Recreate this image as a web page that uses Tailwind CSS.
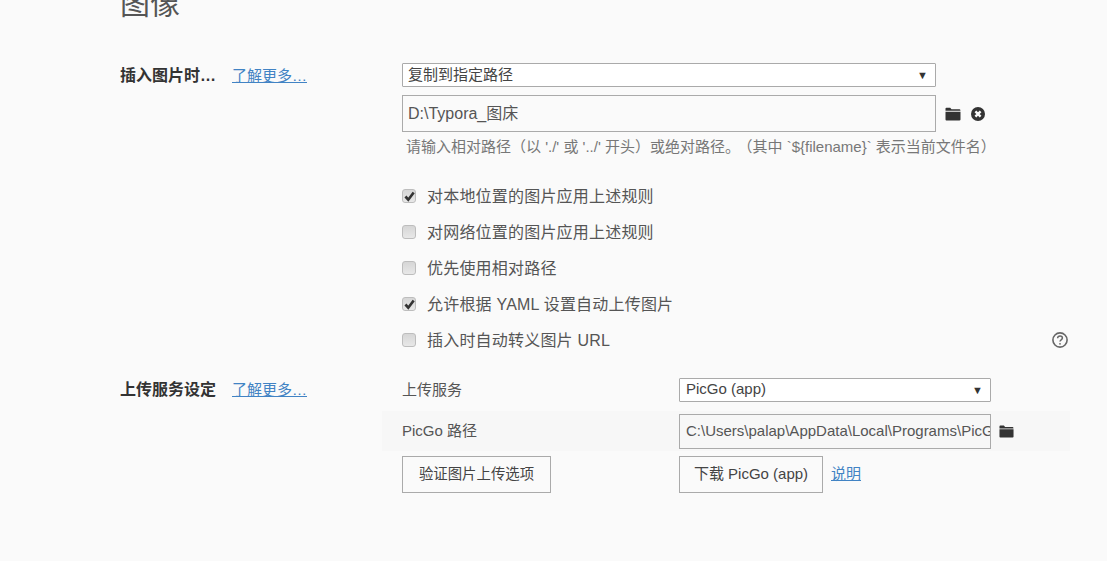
<!DOCTYPE html>
<html lang="zh">
<head>
<meta charset="utf-8">
<script src="https://cdn.jsdelivr.net/npm/@tailwindcss/browser@4"></script>
</head>
<body class="m-0 h-[561px] w-[1107px] overflow-hidden bg-[#fafafa] font-['Liberation_Sans','Noto_Sans_CJK_SC',sans-serif] text-[16px] text-[#333]">
<main class="pl-[120px] pr-[37px]">
  <h1 class="-mt-[14px] h-[77px] text-[30px] leading-[36px] font-normal text-[#555]">图像</h1>

  <section class="flex">
    <div class="flex w-[282px] shrink-0 items-start pt-[2px]">
      <span class="w-[112px] leading-[22px] font-bold text-[#333]">插入图片时…</span>
      <a class="text-[15px] leading-[22px] text-[#4183c4] underline">了解更多…</a>
    </div>
    <div class="flex-1">
      <div class="flex h-[24px] w-[534px] items-center justify-between rounded-[1px] border border-[#aaa] bg-white pr-[7px] pl-[5px] text-[15px] text-[#444]">
        <span class="pt-[1px]">复制到指定路径</span><span class="text-[11px] text-[#333]">▼</span>
      </div>
      <div class="mt-[8px] flex items-center">
        <div class="flex h-[37px] w-[534px] items-center border border-[#aaa] bg-[#fafafa] pl-[5px] text-[#555]">D:\Typora_图床</div>
        <svg class="ml-[9px] h-[16px] w-[16px] text-[#333]" viewBox="0 0 16 16" fill="currentColor"><path d="M.5 2.600c0-.5.4-.9.9-.9h3.800l1.300 1.600h8c.5 0 .9.4.9.9v.5H.5zM.5 5.700h15v7.800c0 .5-.4.9-.9.9H1.400c-.5 0-.9-.4-.9-.9z"/></svg>
        <svg class="ml-[10px] h-[14px] w-[14px] text-[#333]" viewBox="0 0 14 14"><circle cx="7" cy="7" r="7" fill="currentColor"/><path d="M4.400 4.400l5.200 5.200M9.600 4.400l-5.200 5.200" stroke="#fafafa" stroke-width="2.400"/></svg>
      </div>
      <p class="mt-[5px] pl-[4px] text-[15px] leading-[20px] whitespace-nowrap text-[#777]">请输入相对路径（以 './' 或 '../' 开头）或绝对路径。<span class="ml-[5px]">（其中 `${filename}` 表示当前文件名）</span></p>

      <div class="mt-[22px] flex flex-col">
        <label class="flex h-[36px] items-center gap-[11px] tracking-[0.2px] text-[#555]">
          <span class="-mt-[2px] flex h-[14px] w-[14px] items-center justify-center rounded-[3px] border border-[#bdbdbd] bg-gradient-to-b from-[#d6d6d6] to-[#e8e8e8]"><svg class="h-[11px] w-[11px]" viewBox="0 0 10 10"><path d="M1.300 5l2.600 2.900 4.900-6.500" fill="none" stroke="#333" stroke-width="2.400"/></svg></span>
          对本地位置的图片应用上述规则
        </label>
        <label class="flex h-[36px] items-center gap-[11px] tracking-[0.2px] text-[#555]">
          <span class="-mt-[2px] h-[14px] w-[14px] rounded-[3px] border border-[#bdbdbd] bg-gradient-to-b from-[#d6d6d6] to-[#e8e8e8]"></span>
          对网络位置的图片应用上述规则
        </label>
        <label class="flex h-[36px] items-center gap-[11px] tracking-[0.2px] text-[#555]">
          <span class="-mt-[2px] h-[14px] w-[14px] rounded-[3px] border border-[#bdbdbd] bg-gradient-to-b from-[#d6d6d6] to-[#e8e8e8]"></span>
          优先使用相对路径
        </label>
        <label class="flex h-[36px] items-center gap-[11px] tracking-[0.2px] text-[#555]">
          <span class="-mt-[2px] flex h-[14px] w-[14px] items-center justify-center rounded-[3px] border border-[#bdbdbd] bg-gradient-to-b from-[#d6d6d6] to-[#e8e8e8]"><svg class="h-[11px] w-[11px]" viewBox="0 0 10 10"><path d="M1.300 5l2.600 2.900 4.900-6.500" fill="none" stroke="#333" stroke-width="2.400"/></svg></span>
          允许根据 YAML 设置自动上传图片
        </label>
        <label class="flex h-[36px] items-center gap-[11px] tracking-[0.2px] text-[#555]">
          <span class="-mt-[2px] h-[14px] w-[14px] rounded-[3px] border border-[#bdbdbd] bg-gradient-to-b from-[#d6d6d6] to-[#e8e8e8]"></span>
          插入时自动转义图片 URL
          <svg class="mr-[2px] -mt-[3px] ml-auto h-[16px] w-[16px] text-[#666]" viewBox="0 0 16 16" fill="none" stroke="currentColor"><circle cx="8" cy="8" r="7.100" stroke-width="1.600"/><path d="M5.600 6.200c0-1.400 1-2.200 2.400-2.200s2.400.8 2.400 2c0 1.900-2.400 1.800-2.400 3.600" stroke-width="1.500"/><circle cx="8" cy="11.800" r="0.900" fill="currentColor" stroke="none"/></svg>
        </label>
      </div>
    </div>
  </section>

  <section class="mt-[19px] flex">
    <div class="flex w-[282px] shrink-0 items-start pt-[1px]">
      <span class="w-[112px] leading-[22px] font-bold text-[#333]">上传服务设定</span>
      <a class="text-[15px] leading-[22px] text-[#4183c4] underline">了解更多…</a>
    </div>
    <div class="-ml-[20px] flex-1">
      <div class="flex h-[33px] items-start pl-[20px]">
        <span class="w-[277px] pt-[2px] text-[15px] leading-[20px] text-[#555]">上传服务</span>
        <div class="flex h-[24px] w-[312px] items-center justify-between rounded-[1px] border border-[#aaa] bg-white pr-[7px] pl-[6px] text-[15px] text-[#444]">
          <span class="pb-[1px]">PicGo (app)</span><span class="text-[11px] text-[#333]">▼</span>
        </div>
      </div>
      <div class="flex h-[40px] items-center bg-[#f7f7f7] pl-[20px]">
        <span class="w-[277px] text-[15px] text-[#555]">PicGo 路径</span>
        <div class="flex h-[35px] w-[312px] items-center overflow-hidden border border-[#aaa] pl-[6px] text-[15px] whitespace-nowrap text-[#555]">C:\Users\palap\AppData\Local\Programs\PicGo</div>
        <svg class="ml-[8px] h-[15px] w-[15px] text-[#333]" viewBox="0 0 16 16" fill="currentColor"><path d="M.5 2.600c0-.5.4-.9.9-.9h3.800l1.300 1.600h8c.5 0 .9.4.9.9v.5H.5zM.5 5.700h15v7.800c0 .5-.4.9-.9.9H1.400c-.5 0-.9-.4-.9-.9z"/></svg>
      </div>
      <div class="mt-[5px] flex items-center pl-[20px]">
        <div class="w-[277px]">
          <button class="h-[37px] w-[149px] border border-[#aaa] text-[14.4px] text-[#444]">验证图片上传选项</button>
        </div>
        <button class="h-[37px] w-[144px] border border-[#aaa] text-[15px] text-[#444]">下载 PicGo (app)</button>
        <a class="ml-[8px] text-[15px] text-[#4183c4] underline">说明</a>
      </div>
    </div>
  </section>
</main>
</body>
</html>
